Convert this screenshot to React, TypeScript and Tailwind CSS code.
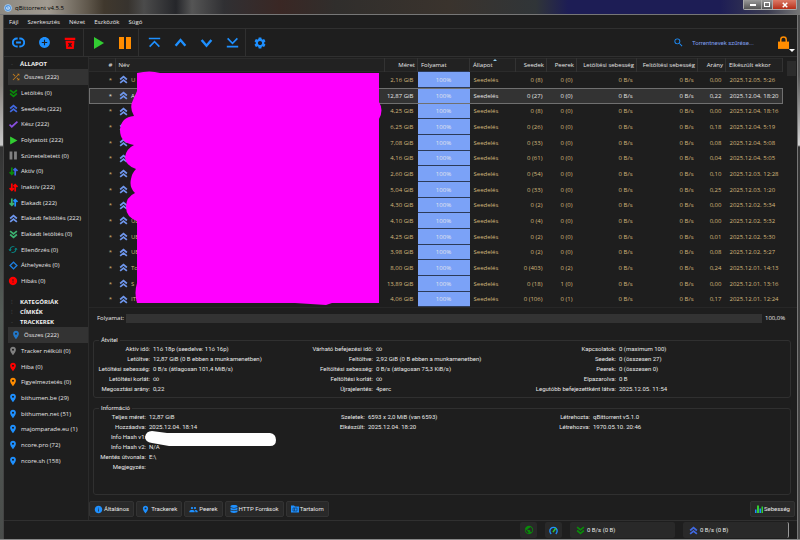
import type { ReactNode } from 'react';
import { MdAddCircle, MdError, MdGroup, MdInfo, MdLocationOn, MdSearch, MdSettings, MdShuffle, MdSync, MdPublic } from 'react-icons/md';
import { FaDatabase } from 'react-icons/fa';

interface SideItem {
  icon: ReactNode;
  label: string;
}

interface Torrent {
  name: string;
  size: string;
  seeds: string;
  peers: string;
  ratio: string;
  done: string;
}

const Chevrons = ({ className, down = false }: { className: string; down?: boolean }) => (
  <svg viewBox="0 0 16 16" className={`size-[9px] shrink-0 ${className}`} fill="none" stroke="currentColor" strokeWidth="3">
    <path d={down ? 'M2 2l6 5 6-5M2 8l6 5 6-5' : 'M2 8l6-5 6 5M2 14l6-5 6 5'} />
  </svg>
);

const Arrows = ({ left, right }: { left: string; right: string }) => (
  <svg viewBox="0 0 16 16" className="size-[9px]" fill="none" strokeWidth="3">
    <path d="M5 1v12M1 9l4 4 4-4" stroke={left} />
    <path d="M11 15V3M8 6l3-3 4 4" stroke={right} />
  </svg>
);

const Pin = ({ className }: { className: string }) => <MdLocationOn className={`size-[10px] ${className}`} />;

const STATUSES: SideItem[] = [
  { icon: <MdShuffle className="size-[10px] text-[#c87f1c]" />, label: 'Összes (222)' },
  { icon: <Chevrons down className="text-[#0a8a0a]" />, label: 'Letöltés (0)' },
  { icon: <Chevrons className="text-[#4169e1]" />, label: 'Seedelés (222)' },
  {
    icon: (
      <svg viewBox="0 0 16 16" className="size-[9px]" fill="none" stroke="#8a4fe0" strokeWidth="3">
        <path d="M1 8l4 4L15 3" />
      </svg>
    ),
    label: 'Kész (222)',
  },
  {
    icon: (
      <svg viewBox="0 0 16 16" className="size-[9px]" fill="#32cd32">
        <path d="M2 1l13 7-13 7z" />
      </svg>
    ),
    label: 'Folytatott (222)',
  },
  {
    icon: (
      <svg viewBox="0 0 16 16" className="size-[9px]" fill="#808080">
        <path d="M1 1h5v14H1zM9 1h5v14H9z" />
      </svg>
    ),
    label: 'Szüneteltetett (0)',
  },
  { icon: <Arrows left="#0a8a0a" right="#4169e1" />, label: 'Aktív (0)' },
  { icon: <Arrows left="#ff0000" right="#ff0000" />, label: 'Inaktív (222)' },
  { icon: <Arrows left="#3cb371" right="#1e90ff" />, label: 'Elakadt (222)' },
  { icon: <Chevrons className="text-[#6f97ee]" />, label: 'Elakadt feltöltés (222)' },
  { icon: <Chevrons down className="text-[#3cb371]" />, label: 'Elakadt letöltés (0)' },
  { icon: <MdSync className="size-[11px] rotate-90 text-[#009b9b]" />, label: 'Ellenőrzés (0)' },
  {
    icon: (
      <svg viewBox="0 0 16 16" className="size-[9px]" fill="none" stroke="#1e7fdf" strokeWidth="2.5">
        <path d="M8 2l6 6-6 6-6-6z" />
      </svg>
    ),
    label: 'Áthelyezés (0)',
  },
  { icon: <MdError className="size-[10px] text-[#ff0000]" />, label: 'Hibás (0)' },
];

const TRACKERS: SideItem[] = [
  { icon: <Pin className="text-[#2277c8]" />, label: 'Összes (222)' },
  { icon: <Pin className="text-[#808080]" />, label: 'Tracker nélküli (0)' },
  { icon: <Pin className="text-[#ff0000]" />, label: 'Hiba (0)' },
  { icon: <Pin className="text-[#ff8c00]" />, label: 'Figyelmeztetés (0)' },
  { icon: <Pin className="text-[#1e90ff]" />, label: 'bithumen.be (29)' },
  { icon: <Pin className="text-[#1e90ff]" />, label: 'bithumen.net (51)' },
  { icon: <Pin className="text-[#1e90ff]" />, label: 'majomparade.eu (1)' },
  { icon: <Pin className="text-[#1e90ff]" />, label: 'ncore.pro (72)' },
  { icon: <Pin className="text-[#1e90ff]" />, label: 'ncore.sh (158)' },
];

const TORRENTS: Torrent[] = [
  { name: 'U', size: '2,16 GiB', seeds: '0 (8)', peers: '0 (0)', ratio: '0,00', done: '2025.12.05. 5:26' },
  { name: 'A', size: '12,87 GiB', seeds: '0 (27)', peers: '0 (0)', ratio: '0,22', done: '2025.12.04. 18:20' },
  { name: '', size: '4,25 GiB', seeds: '0 (8)', peers: '0 (0)', ratio: '0,00', done: '2025.12.04. 18:16' },
  { name: '', size: '6,25 GiB', seeds: '0 (26)', peers: '0 (0)', ratio: '0,18', done: '2025.12.04. 5:19' },
  { name: '', size: '7,08 GiB', seeds: '0 (33)', peers: '0 (0)', ratio: '0,08', done: '2025.12.04. 5:08' },
  { name: '', size: '4,16 GiB', seeds: '0 (61)', peers: '0 (0)', ratio: '0,04', done: '2025.12.04. 5:05' },
  { name: '', size: '2,60 GiB', seeds: '0 (54)', peers: '0 (0)', ratio: '0,10', done: '2025.12.03. 12:28' },
  { name: '', size: '5,04 GiB', seeds: '0 (33)', peers: '0 (0)', ratio: '0,25', done: '2025.12.03. 1:20' },
  { name: '', size: '4,30 GiB', seeds: '0 (2)', peers: '0 (0)', ratio: '0,00', done: '2025.12.02. 5:34' },
  { name: 'UE...', size: '4,10 GiB', seeds: '0 (4)', peers: '0 (0)', ratio: '0,00', done: '2025.12.02. 5:32' },
  { name: 'UE', size: '4,25 GiB', seeds: '0 (2)', peers: '0 (0)', ratio: '0,01', done: '2025.12.02. 5:30' },
  { name: 'UEFA.', size: '3,98 GiB', seeds: '0 (2)', peers: '0 (0)', ratio: '0,08', done: '2025.12.02. 5:27' },
  { name: 'Tour', size: '8,00 GiB', seeds: '0 (403)', peers: '0 (2)', ratio: '0,24', done: '2025.12.01. 14:13' },
  { name: 'S', size: '13,89 GiB', seeds: '0 (18)', peers: '1 (0)', ratio: '0,00', done: '2025.12.01. 13:16' },
  { name: 'IT...', size: '4,06 GiB', seeds: '0 (106)', peers: '0 (1)', ratio: '0,17', done: '2025.12.01. 12:24' },
];

const TRANSFER: [string, string][][] = [
  [
    ['Aktív idő:', '11ó 18p (seedelve: 11ó 16p)'],
    ['Letöltve:', '12,87 GiB (0 B ebben a munkamenetben)'],
    ['Letöltési sebesség:', '0 B/s (átlagosan 101,4 MiB/s)'],
    ['Letöltési korlát:', '∞'],
    ['Megosztási arány:', '0,22'],
  ],
  [
    ['Várható befejezési idő:', '∞'],
    ['Feltöltve:', '2,92 GiB (0 B ebben a munkamenetben)'],
    ['Feltöltési sebesség:', '0 B/s (átlagosan 75,3 KiB/s)'],
    ['Feltöltési korlát:', '∞'],
    ['Újrajelentés:', '4perc'],
  ],
  [
    ['Kapcsolatok:', '0 (maximum 100)'],
    ['Seedek:', '0 (összesen 27)'],
    ['Peerek:', '0 (összesen 0)'],
    ['Elpazarolva:', '0 B'],
    ['Legutóbb befejezettként látva:', '2025.12.05. 11:54'],
  ],
];

const INFO: [string, string][][] = [
  [
    ['Teljes méret:', '12,87 GiB'],
    ['Hozzáadva:', '2025.12.04. 18:14'],
    ['Info Hash v1:', ''],
    ['Info Hash v2:', 'N/A'],
    ['Mentés útvonala:', 'E:\\'],
    ['Megjegyzés:', ''],
  ],
  [
    ['Szeletek:', '6593 x 2,0 MiB (van 6593)'],
    ['Elkészült:', '2025.12.04. 18:20'],
  ],
  [
    ['Létrehozta:', 'qBittorrent v5.1.0'],
    ['Létrehozva:', '1970.05.10. 20:46'],
  ],
];

function ToolButton({ label, children }: { label: string; children: ReactNode }) {
  return (
    <button aria-label={label} className="flex h-full w-[26px] items-center justify-center">
      {children}
    </button>
  );
}

function ToolGroup({ children }: { children: ReactNode }) {
  return <div className="flex h-full border-r border-[#303030] pl-px">{children}</div>;
}

function Stroke({ d, width = 2 }: { d: string; width?: number }) {
  return (
    <svg viewBox="0 0 16 16" className="size-[13px]" fill="none" stroke="#1e90ff" strokeWidth={width}>
      <path d={d} />
    </svg>
  );
}

function SideHeading({ children, open = false }: { children: ReactNode; open?: boolean }) {
  return (
    <h2 className="flex h-[10px] items-center font-bold text-[#f0f0f0]">
      <span className="w-[12px] pl-[3px] font-normal text-[#555]">{open ? '-' : '⁝'}</span>
      {children}
    </h2>
  );
}

function SideList({ items }: { items: SideItem[] }) {
  return (
    <ul>
      {items.map((item, i) => (
        <li key={item.label} className="h-[16px] nth-[3n]:h-[15px]">
          <button className={`flex h-full w-full items-center gap-[3px] ${i === 0 ? 'bg-[#333] pl-[3px]' : ''}`}>
            <span className="flex w-[10px] justify-center">{item.icon}</span>
            {item.label}
          </button>
        </li>
      ))}
    </ul>
  );
}

function Details({ title, columns, grid, className }: { title: string; columns: [string, string][][]; grid: string; className: string }) {
  return (
    <fieldset className={`rounded-[3px] border border-[#303030] ${className}`}>
      <legend className="ml-[5px] px-[2px] leading-[8px]">{title}</legend>
      <div className={`grid ${grid}`}>
        {columns.map((rows, i) => (
          <dl key={i} className="contents">
            <div className="text-right">
              {rows.map(([label]) => (
                <dt key={label} className="h-[10px] leading-[10px] whitespace-nowrap">{label}</dt>
              ))}
            </div>
            <div className="pl-[3px]">
              {rows.map(([label, value]) => (
                <dd key={label} className="h-[10px] leading-[10px] whitespace-nowrap">{value}</dd>
              ))}
            </div>
          </dl>
        ))}
      </div>
    </fieldset>
  );
}

function TabButton({ icon, label }: { icon: ReactNode; label: string }) {
  return (
    <button className="flex h-[16px] items-center gap-px rounded-[2px] border border-[#333] bg-[#292929] px-[4px]">
      {icon}
      {label}
    </button>
  );
}

const TH = 'border-r border-[#333] p-0 pr-[2px] pl-[3px] font-normal whitespace-nowrap';

export default function App() {
  return (
    <div className="flex min-h-screen flex-col bg-[#1e1e1e] font-['Open_Sans',sans-serif] text-[6px] leading-[10px] text-[#e8e8e8]">
      {/* Title bar */}
      <header className="flex h-[15px] items-start border-b border-[#777] bg-[linear-gradient(90deg,#8d8981_0%,#a09a90_6%,#5f574b_11%,#40382d_13%,#37332e_16%,#4b4b4b_18%,#25262a_22%,#555_24%,#303033_28%,#3a2724_35%,#302e2c_42%,#3a332d_56%,#303538_67%,#1d1d55_71%,#1d1d55_90%,#3b3c50_96%,#777_100%)]">
        <div className="flex flex-1 items-center gap-[3px] pt-[3px] pl-[4px] text-black">
          <svg viewBox="0 0 16 16" className="size-[8px]">
            <circle cx="8" cy="8" r="7" fill="#4f94dc" stroke="#b5d5f5" strokeWidth="1.5" />
            <path d="M8 4v8M5 6v4h3M8 6h3v4H8" fill="none" stroke="#dcecff" strokeWidth="1.3" />
          </svg>
          <h1>qBittorrent v4.5.5</h1>
        </div>
        <div className="mr-[3px] flex h-[10px] overflow-hidden rounded-b-[2px] border border-t-0 border-[#aaa]">
          <button aria-label="Kis méret" className="flex w-[18px] items-center justify-center border-r border-[#aaa] bg-linear-to-b from-[#999] to-[#555]">
            <span className="h-[2px] w-[6px] bg-white" />
          </button>
          <button aria-label="Teljes méret" className="flex w-[11px] items-center justify-center border-r border-[#aaa] bg-linear-to-b from-[#999] to-[#555]">
            <span className="h-[5px] w-[6px] border border-white" />
          </button>
          <button aria-label="Bezárás" className="flex w-[23px] items-center justify-center bg-linear-to-b from-[#dc7966] to-[#b52c16]">
            <svg viewBox="0 0 8 8" className="size-[6px]" stroke="#fff" strokeWidth="2">
              <path d="M1 1l6 6M7 1L1 7" />
            </svg>
          </button>
        </div>
      </header>

      <div className="flex flex-1">
        <div className="w-[4px] border-r border-[#444] bg-[linear-gradient(180deg,#8a8377_0,#8a8580_70px,#c8c8c8_130px,#333_132px,#555d58_300px,#4a4d4b_100%)]" />

        <div className="flex min-w-0 flex-1 flex-col">
          <nav className="flex h-[14px] items-center gap-[9px] border-b border-[#303030] pl-[5px]">
            {['Fájl', 'Szerkesztés', 'Nézet', 'Eszközök', 'Súgó'].map(item => (
              <button key={item}>{item}</button>
            ))}
          </nav>

          {/* Toolbar */}
          <div className="flex h-[28px] items-center gap-px border-b border-[#303030]">
            <ToolGroup>
              <ToolButton label="Torrent hivatkozás hozzáadása">
                <Stroke d="M7 3H6a5 5 0 000 10h1M9 3h1a5 5 0 010 10H9M5 8h6" width={2.4} />
              </ToolButton>
              <ToolButton label="Torrent hozzáadása">
                <MdAddCircle className="size-[13px] text-[#1e90ff]" />
              </ToolButton>
              <ToolButton label="Törlés">
                <svg viewBox="0 0 16 16" className="size-[12px]">
                  <path d="M1 1h14v3H1zM2 5h12l-1 11H3z" fill="#f00" />
                  <path d="M6 8l4 5M10 8l-4 5" stroke="#1e1e1e" strokeWidth="1.8" />
                </svg>
              </ToolButton>
            </ToolGroup>
            <ToolGroup>
              <ToolButton label="Folytatás">
                <svg viewBox="0 0 12 12" className="size-[12px]" fill="#32cd32">
                  <path d="M1 0l10 6-10 6z" />
                </svg>
              </ToolButton>
              <ToolButton label="Szünet">
                <svg viewBox="0 0 12 12" className="size-[12px]" fill="#ff8c00">
                  <path d="M0 0h5v12H0zM7 0h5v12H7z" />
                </svg>
              </ToolButton>
            </ToolGroup>
            <ToolGroup>
              <ToolButton label="Legfelülre">
                <Stroke d="M1 3h14M2 13l6-6 6 6" />
              </ToolButton>
              <ToolButton label="Fel">
                <Stroke d="M2 12l6-7 6 7" width={3} />
              </ToolButton>
              <ToolButton label="Le">
                <Stroke d="M2 5l6 7 6-7" width={3} />
              </ToolButton>
              <ToolButton label="Legalulra">
                <Stroke d="M1 13h14M2 3l6 6 6-6" />
              </ToolButton>
            </ToolGroup>
            <ToolButton label="Beállítások">
              <MdSettings className="size-[14px] text-[#1e90ff]" />
            </ToolButton>
            <label className="ml-auto flex items-center gap-[8px]">
              <MdSearch className="size-[11px] text-[#1e90ff]" />
              <input
                aria-label="Torrentnevek szűrése"
                placeholder="Torrentnevek szűrése..."
                className="w-[85px] bg-transparent font-['Roboto',sans-serif] outline-none placeholder:text-[#7f9fee]"
              />
            </label>
            <button aria-label="Zárolás" className="flex items-end pr-[2px]">
              <svg viewBox="0 0 12 14" className="h-[13px] w-[11px]">
                <path d="M3 7V4a3 3 0 016 0v3" fill="none" stroke="#ff8c00" strokeWidth="1.6" />
                <path d="M0 6h12v8H0z" fill="#ff8c00" />
              </svg>
              <svg viewBox="0 0 6 3" className="-mb-[3px] h-[3px] w-[6px]" fill="#fff">
                <path d="M0 0h6L3 3z" />
              </svg>
            </button>
          </div>

          <div className="flex flex-1">
            {/* Filters */}
            <aside className="w-[85px] shrink-0 border-r border-[#2b2b2b] pt-[2px] pl-[4px]">
              <SideHeading open>ÁLLAPOT</SideHeading>
              <SideList items={STATUSES} />
              <div className="pt-[8px]">
                <SideHeading>KATEGÓRIÁK</SideHeading>
                <SideHeading>CÍMKÉK</SideHeading>
                <SideHeading open>TRACKEREK</SideHeading>
              </div>
              <SideList items={TRACKERS} />
            </aside>

            <main className="flex min-w-0 flex-1 flex-col">
              {/* Torrent list */}
              <div className="relative flex border-b border-[#272727] pt-px">
                <table className="min-w-0 flex-1 table-fixed border-collapse">
                  <thead>
                    <tr className="h-[13px] border-y border-[#2b2b2b] bg-[#222]">
                      <th className={`w-[26px] text-right ${TH}`}>#</th>
                      <th className={`text-left ${TH}`}>Név</th>
                      <th className={`w-[33px] text-right ${TH}`}>Méret</th>
                      <th className={`w-[52px] text-left ${TH}`}>Folyamat</th>
                      <th className={`relative w-[46px] text-left ${TH}`}>
                        Állapot
                        <svg viewBox="0 0 4 2" className="absolute top-0 left-1/2 h-[2px] w-[4px]" fill="#8ecdf0">
                          <path d="M0 2l2-2 2 2z" />
                        </svg>
                      </th>
                      <th className={`w-[31px] text-right ${TH}`}>Seedek</th>
                      <th className={`w-[30px] text-right ${TH}`}>Peerek</th>
                      <th className={`w-[60px] text-right ${TH}`}>Letöltési sebesség</th>
                      <th className={`w-[61px] text-right ${TH}`}>Feltöltési sebesség</th>
                      <th className={`w-[28px] text-right ${TH}`}>Arány</th>
                      <th className={`w-[57px] text-left ${TH}`}>Elkészült ekkor</th>
                    </tr>
                  </thead>
                  <tbody className="text-right whitespace-nowrap text-[#d4b87c]">
                    {TORRENTS.map((t, i) => (
                      <tr
                        key={t.done}
                        className={`h-[16px] nth-[3n]:h-[15px] ${i === 1 ? 'bg-[#333] text-[#e6e6e6] outline outline-[#707070] -outline-offset-1' : ''}`}
                      >
                        <td className="p-0 pr-[3px]">*</td>
                        <td className="p-0 pl-[4px]">
                          <div className="flex items-center gap-[3px]">
                            <Chevrons className="text-[#6f97ee]" />
                            {t.name}
                          </div>
                        </td>
                        <td className="p-0 pr-[4px]">{t.size}</td>
                        <td className="border-y border-[#2c3a58] bg-[#7ba2f7] p-0 text-center text-[#e3e6ee]">100%</td>
                        <td className="p-0 pl-[4px] text-left">Seedelés</td>
                        <td className="p-0 pr-[4px]">{t.seeds}</td>
                        <td className="p-0 pr-[4px]">{t.peers}</td>
                        <td className="p-0 pr-[4px]">0 B/s</td>
                        <td className="p-0 pr-[4px]">0 B/s</td>
                        <td className="p-0 pr-[4px]">{t.ratio}</td>
                        <td className="p-0 pl-[4px] text-left">{t.done}</td>
                      </tr>
                    ))}
                  </tbody>
                </table>
                <div className="w-[14px] shrink-0 pt-[3px] pl-[4px]">
                  <div className="h-[15px] w-[9px] bg-[#2c2c2c]" />
                </div>
                {/* Marker strokes over the names */}
                <svg viewBox="0 0 264 236" className="absolute top-[14px] left-[31px] h-[236px] w-[264px]" fill="#f0f">
                  <path d="M17 2Q30-1 40 2H259V31Q264 39 259 48V232H212L206 234L175 232H17Q14 222 17 212V150Q6 146 6 136Q6 126 15 122Q9 116 11 108Q12 102 16 98Q5 94 5 86Q6 78 14 74Q0 72 0 59Q1 46 14 45Q9 37 13 29L17 20Z" />
                </svg>
              </div>

              <div className="flex items-center gap-[3px] pt-[5px] pr-[10px] pl-[8px]">
                <span className="w-[26px] text-right">Folyamat:</span>
                <div className="h-[9px] flex-1 bg-[#333]" />
                <span className="w-[22px]">100,0%</span>
              </div>

              <div className="flex flex-1 flex-col gap-[6px] pt-[13px] pr-[6px] pl-[4px] font-['Roboto',sans-serif]">
                <Details title="Átvitel" columns={TRANSFER} grid="grid-cols-[56px_145fr_78px_148fr_95px_174fr]" className="h-[62px]" />
                <div className="relative">
                  <Details title="Információ" columns={INFO} grid="grid-cols-[52px_145fr_74px_133fr_92px_200fr]" className="h-[91px]" />
                  <svg viewBox="0 0 132 16" className="absolute top-[27px] left-[52px] h-[16px] w-[132px]" fill="#fff">
                    <path d="M7 0L22 2H125Q131 3 131 9Q131 15 125 15H24L7 12Q0 11 0 6Q1 0 7 0Z" />
                  </svg>
                </div>
              </div>

              <div className="flex gap-[2px] pt-[2px] pr-[2px] pb-[3px] font-['Roboto',sans-serif]">
                <TabButton icon={<MdInfo className="size-[9px] text-[#1e90ff]" />} label="Általános" />
                <TabButton icon={<MdLocationOn className="size-[9px] text-[#1e90ff]" />} label="Trackerek" />
                <TabButton icon={<MdGroup className="size-[9px] text-[#1e90ff]" />} label="Peerek" />
                <TabButton icon={<FaDatabase className="size-[8px] text-[#1e90ff]" />} label="HTTP Források" />
                <TabButton
                  icon={
                    <svg viewBox="0 0 16 16" className="size-[8px]">
                      <path d="M0 1h6l2 2h8v12H0z" fill="#1e90ff" />
                      <path d="M4 6h8v6H4zM7 6v6" fill="none" stroke="#17426f" strokeWidth="1.5" />
                    </svg>
                  }
                  label="Tartalom"
                />
                <div className="ml-auto">
                  <TabButton
                    icon={
                      <svg viewBox="0 0 16 16" className="size-[8px]">
                        <path d="M0 9h3v7H0zM9 7h3v9H9z" fill="#1e90ff" />
                        <path d="M4 1h4v15H4zM13 3h3v13h-3z" fill="#32cd32" />
                      </svg>
                    }
                    label="Sebesség"
                  />
                </div>
              </div>
            </main>
          </div>

          {/* Status bar */}
          <footer className="flex h-[19px] items-center justify-end gap-[8px] border-t border-[#303030] pr-[8px] font-['Roboto',sans-serif]">
            <button aria-label="Kapcsolat állapota" className="flex h-[16px] w-[17px] items-center justify-center rounded-[2px] bg-[#292929]">
              <MdPublic className="size-[10px] text-[#0a8a0a]" />
            </button>
            <button aria-label="Alternatív sebességkorlátok" className="flex h-[16px] w-[17px] items-center justify-center rounded-[2px] bg-[#292929]">
              <svg viewBox="0 0 16 16" className="size-[9px]" fill="none" strokeWidth="2.4">
                <path d="M4 14A6.500 6.500 0 1112 14" stroke="#1e90ff" />
                <path d="M7 11l5-7" stroke="#32cd32" />
              </svg>
            </button>
            <button className="flex h-[16px] w-[105px] items-center gap-[2px] rounded-[2px] bg-[#292929] px-[6px]">
              <Chevrons down className="text-[#0a8a0a]" />0 B/s (0 B)
            </button>
            <button className="flex h-[16px] w-[106px] items-center gap-[2px] rounded-[2px] border-r border-[#999] bg-[#292929] px-[6px]">
              <Chevrons className="text-[#4169e1]" />0 B/s (0 B)
            </button>
          </footer>
        </div>

        <div className="w-[3px] border-l border-[#777] bg-[linear-gradient(180deg,#4a4a4a_0,#555_60px,#d5d5d5_130px,#333_132px,#4a4a4a_100%)]" />
      </div>
      <div className="h-px bg-[#888]" />
    </div>
  );
}
